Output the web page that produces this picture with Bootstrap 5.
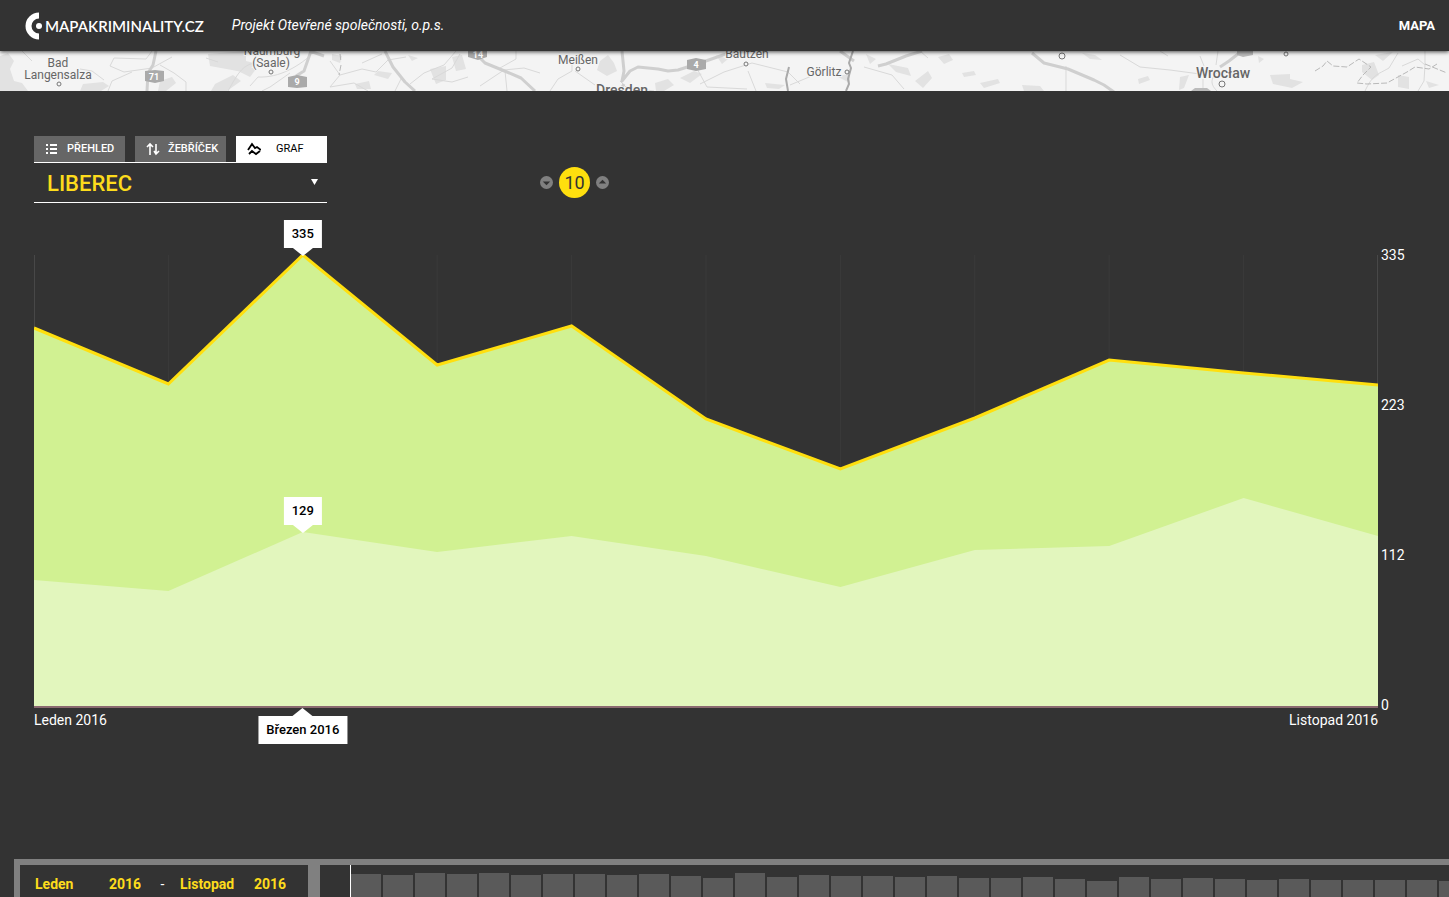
<!DOCTYPE html>
<html lang="cs">
<head>
<meta charset="utf-8">
<meta name="viewport" content="width=device-width, initial-scale=1">
<title>Mapa kriminality – Liberec</title>
<link rel="stylesheet" href="https://cdn.jsdelivr.net/npm/bootstrap@5.3.0/dist/css/bootstrap.min.css">
<style>
  body { background: #333; color: #fff; font-family: Roboto, sans-serif; font-size: 14px; line-height: 20px; overflow: hidden; }
  a { color: #fff; text-decoration: none; }
  .topbar { height: 51px; padding: 0 14px 0 25px; background: #333; box-shadow: 0 1px 4px rgba(0,0,0,.7); z-index: 2; }
  .brand-name { font: 600 15px/20px Lato, sans-serif; margin-left: 2px; }
  .motto { font-size: 14px; font-style: italic; margin-left: 28px; padding-bottom: 2px; }
  .map-link { font-size: 13px; font-weight: 700; }
  .map-strip { height: 40px; background: #f4f4f4; }
  .map-strip svg { width: 100%; height: 40px; }
  .content { padding: 45px 71px 0 34px; }
  .picker { width: 293px; }
  .tab-btn { width: 91px; height: 26px; padding: 0 0 0 11px; border: 0; border-radius: 0; background: #666; color: #fff; font-size: 11px; font-weight: 500; line-height: 26px; }
  .tab-btn svg { width: 14px; height: 14px; margin-right: 8px; }
  .tab-btn.current { background: #fff; color: #000; font-weight: 400; }
  .tab-btn.current svg { margin-right: 15px; }
  .place-box { height: 41px; border-top: 1px solid #fff; border-bottom: 1px solid #fff; }
  .plain-select { appearance: none; border: 0; padding: 0; background: none; color: #fddc1c; font-weight: 500; outline: 0; }
  .place { width: 100%; height: 39px; padding: 2px 0 0 13px; font-size: 22px; }
  .place-arrow { right: 8px; top: 16px; width: 9px; height: 6px; pointer-events: none; }
  .counter { margin-left: 213px; height: 41px; gap: 6px; }
  .step { width: 13px; height: 13px; padding: 0; border: 0; background: none; display: flex; }
  .step svg { width: 13px; height: 13px; }
  .count { width: 31px; height: 31px; border-radius: 50%; background: #ffdf0e; color: #333; font-size: 18px; line-height: 32px; text-align: center; }
  .chart { margin-top: 52px; height: 453px; }
  .chart > svg { width: 100%; height: 453px; display: block; }
  .chart line, .chart polyline { vector-effect: non-scaling-stroke; }
  .scale { left: 100%; top: -10px; height: 470px; padding-left: 3px; }
  .tip { transform: translateX(-50%); background: #fff; color: #000; height: 28px; line-height: 28px; padding: 0 8px; font-size: 13px; font-weight: 500; white-space: nowrap; left: 20%; }
  .tip::after { content: ""; position: absolute; left: 50%; top: 100%; margin-left: -10px; border: 10px solid transparent; border-top: 8px solid #fff; border-bottom: 0; }
  .tip.up::after { top: auto; bottom: 100%; border-top: 0; border-bottom: 8px solid #fff; }
  .tip-total { top: -35px; } .tip-part { top: 242px; } .tip-month { top: 461px; }
  .months { padding-top: 2px; }
  .timeline { margin-left: 14px; height: 38px; border-top: 6px solid #808080; border-left: 6px solid #808080; }
  .range { width: 300px; border-right: 12px solid #808080; padding: 9px 0 0 15px; flex: none; }
  .range .plain-select { height: 20px; font-size: 14px; font-weight: 700; }
  .w-month { width: 74px; } .w-year { width: 32px; }
  .dash { width: 39px; padding-left: 4px; }
  .bars { margin-left: 30px; border-left: 1px solid #fff; gap: 2px; min-width: 0; }
  .bars div { width: 30px; flex: none; background: #5a5a5a; }
</style>
</head>
<body class="d-flex flex-column min-vh-100">
<header class="topbar d-flex align-items-center position-relative">
  <a href="#" class="d-flex align-items-center" aria-label="Mapakriminality.cz">
    <svg width="18" height="28" viewBox="0 0 18 28" fill="#fff"><path d="M14 0.5A13.5 13.5 0 0 0 14 27.5V21.5A7.5 7.5 0 0 1 14 6.5Z"/><circle cx="14" cy="14" r="3"/></svg>
    <span class="brand-name">MAPAKRIMINALITY.CZ</span>
  </a>
  <span class="motto">Projekt Otevřené společnosti, o.p.s.</span>
  <a href="#" class="ms-auto map-link">MAPA</a>
</header>

<div class="map-strip">
  <svg viewBox="0 0 1449 40" preserveAspectRatio="xMinYMin slice" class="d-block" font-family="Roboto, sans-serif" font-size="12" fill="#666" text-anchor="middle">
    <g fill="#e2e2e2">
      <path d="M0 5l8-3 6 8-4 8 4 12 8 2 6 8H0z"/>
      <path d="M208 3l38-3v10l12 3-16 8-10-2-22-4zM238 12l18 6-6 8-10-5zM215 33l18-9 8 6-14 10h-16zM160 30l12-4 4 6-10 8h-8zM83 33l20-2 6 4-8 5H80z"/>
      <path d="M332 3l10 2-2 7-8-3zM378 20l14 2-4 6-14-4zM430 18l16-3v14l-10 4zM452 6l10-2 4 14-10 2zM355 33l14-3 2 8h-14zM408 4l10 3-6 3z"/>
      <path d="M600 10l8-6 6 8 3 8-10 5-10-6zM655 32l13-4 6 6-10 6h-8zM680 27l14-7 8 3-12 9zM716 4l12 4-6 5zM765 32l20 2-6 4-12-1zM836 25l14-2v9zM866 3l10 5-6 5z"/>
      <path d="M888 13l20 4 3 8-15-4zM915 30l13-10 4 7-9 10zM938 6l11-3 4 6-9 4zM962 22l12-2 2 4-12 2zM980 32l18-4 2 4-16 5zM1022 34l18 1 4 5h-20zM1082 2l13 2 7 5-12-1zM1138 28l10-3 2 4-11 4zM1180 26l9-2-5 13-5 2z"/>
      <path d="M1270 24l20-1v5l13 3-11 6-19-4zM1362 14l12-3 5 13-7 5-10-8zM1398 24l11 2v12l-11-2zM1375 4l18-3-10 9zM1426 30l13 4-10 3zM1258 5l6 3-5 4z"/>
    </g>
    <g fill="none" stroke="#d9d9d9" stroke-width="1">
      <path d="M22 0l10 10M80 18l12 2 12 9M152 0l-6 8-32-1-4 8 14 6 28-4 20-11M132 21l-20 9-4 10M160 14l14 8 12 9v9M206 7l12 4M228 40c10-18 14-25 26-28M290 22l-20 14-8 4M310 5c-12 10-30 22-52 21l-8 9M330 10l10 14 22-6 14 3 12-12 18-3M340 24l-10 12 24-4 14 8M362 12l20-9M392 16l10 10-7 14M410 33l14-11 20-8 12-14M460 3l-8 14-20 11 20 3 16-5"/>
      <path d="M480 35l24-16 20-2 16 5M505 20l2 20M516 0v8l-16 9M550 40l8-12 14-8v-8M575 20l20 14M620 30l6 6 28 4M695 14l12 22 40 2M700 33l24-12 28-9M752 12l36 9 12 12M748 20l8 20M790 34l24-10M864 16l28 8 12 14M920 0l8 7"/>
      <path d="M1120 4l20 12 30 3 30 4M1160 0l8 5M1066 15v25M1203 28v12M1200 5l4 10M1218 0l-2 14M1219 20c-10 8-8 14-2 20M1365 40c8-17 12-16 24-23l9-15M1402 15l16-7 7 6-1 16-6 10M1425 0v13"/>
    </g>
    <g fill="none" stroke="#cfcfcf" stroke-width="3" stroke-linejoin="round">
      <path d="M156 0l-3 14-5 8-1 18M311 0l-7 20-8 5M310 0l14 5M385 0l8 16 12 15 10 9M473 0l12 12 22 9 14 6 14 13M622 0l2 20-2 10 8-10 8-4 20 2 10 2 10-1 25-8 20-7 30-7M624 33l-4 7M922 0l-16 5-20 8-8 2M840 0l14 10M1032 2l12 10 24 6 26 11 10 5 10 7M1238 3l-9 7-9 6"/>
    </g>
    <path d="M789 16l-3 12 2 12M853 0l-4 12 2 5-3 11 1 5-3 7" fill="none" stroke="#aaa" stroke-width="2"/>
    <path d="M1315 20l8-5 4-5 6 5 14 1 12-8 12 8-8 8-6 8 10 1 20-1 20-11 8-5 14 2 8-5M1425 13l22 9M340 3l1 8M341 14l-2 10" fill="none" stroke="#b9b9b9" stroke-dasharray="6 2"/>
    <path d="M1237 0h16v4l-10 2-6-2zM1195 37h12l4 3h-20z" fill="#bbb"/>
    <g fill="#aaa">
      <path d="M145 20l10-1 9 1v10l-9 2-10-2zM288 26l9-2 10 2v10l-10 1-9-1zM468 0h19v6l-9 3-10-3zM687 9l9-2 10 2v9l-10 2-9-2z"/>
    </g>
    <g fill="#fff" font-size="9" font-weight="700"><text x="154" y="29">71</text><text x="297" y="34">9</text><text x="478" y="7">14</text><text x="696" y="17">4</text></g>
    <g fill="#f5f5f5" stroke="#777"><circle cx="59" cy="33" r="2"/><circle cx="271" cy="21" r="2"/><circle cx="578" cy="18" r="2"/><circle cx="746" cy="13" r="2"/><circle cx="847" cy="21" r="2"/><circle cx="1062" cy="5" r="3"/><circle cx="1222" cy="33" r="3"/><circle cx="1286" cy="3" r="2"/></g>
    <g stroke="#f5f5f5" stroke-width="2" paint-order="stroke">
      <text x="58" y="16">Bad</text><text x="58" y="28">Langensalza</text>
      <text x="272" y="4">Naumburg</text><text x="271" y="16">(Saale)</text>
      <text x="578" y="13">Meißen</text><text x="747" y="7">Bautzen</text><text x="824" y="25">Görlitz</text>
      <text x="622" y="44" font-size="14" font-weight="500">Dresden</text>
      <text x="1223" y="27" font-size="14" font-weight="500">Wrocław</text>
    </g>
  </svg>
</div>

<main class="content flex-grow-1">
  <div class="d-flex align-items-end">
    <div class="picker">
      <div class="d-flex justify-content-between">
        <button type="button" class="tab-btn d-flex align-items-center"><svg viewBox="0 0 14 14" fill="#fff"><path d="M1 2h2v2H1zM5 2h7v2H5zM1 6h2v2H1zM5 6h7v2H5zM1 10h2v2H1zM5 10h7v2H5z"/></svg>PŘEHLED</button>
        <button type="button" class="tab-btn d-flex align-items-center"><svg viewBox="0 0 14 14" fill="none" stroke="#fff" stroke-width="2"><path d="M4 13V3M1 5l3-3 3 3M10 2v9M8 9l2 3 3-3" stroke-width="1.6"/></svg>ŽEBŘÍČEK</button>
        <button type="button" class="tab-btn current d-flex align-items-center" aria-pressed="true"><svg viewBox="0 0 14 14" fill="none" stroke="#000" stroke-width="1.8"><path d="M1 8l4-6 3 4 2-1 4 3M2 12l3-3 4 3 4-3"/></svg>GRAF</button>
      </div>
      <div class="place-box position-relative">
        <select class="plain-select place" aria-label="Město"><option>LIBEREC</option></select>
        <svg class="place-arrow position-absolute" viewBox="0 0 9 6" fill="#fff"><path d="M1 0h7L4.500 6z"/></svg>
      </div>
    </div>
    <div class="counter d-flex align-items-center">
      <button type="button" class="step" aria-label="Méně"><svg viewBox="0 0 14 14"><circle cx="7" cy="7" r="7" fill="#808080"/><path d="M3 6h8L7 10z" fill="#333"/></svg></button>
      <span class="count">10</span>
      <button type="button" class="step" aria-label="Více"><svg viewBox="0 0 14 14"><circle cx="7" cy="7" r="7" fill="#808080"/><path d="M3 8h8L7 4z" fill="#333"/></svg></button>
    </div>
  </div>

  <div class="chart position-relative">
    <svg viewBox="0 0 10 453" preserveAspectRatio="none" role="img" aria-label="Vývoj počtu trestných činů">
      <g stroke="#3b3b3b"><line x1="1" x2="1" y2="451"/><line x1="2" x2="2" y2="451"/><line x1="3" x2="3" y2="451"/><line x1="4" x2="4" y2="451"/><line x1="5" x2="5" y2="451"/><line x1="6" x2="6" y2="451"/><line x1="7" x2="7" y2="451"/><line x1="8" x2="8" y2="451"/><line x1="9" x2="9" y2="451"/></g>
      <g stroke="#484848" stroke-width="2"><line x1="0" x2="0" y2="453"/><line x1="10" x2="10" y2="453"/></g>
      <polygon fill="#d1f192" points="0,451 0,73 1,129 2,0 3,110 4,71 5,164 6,214 7,163 8,105 9,118 10,130 10,451"/>
      <polygon fill="#e2f6bd" points="0,451 0,325 1,336 2,277 3,297 4,281 5,301 6,332 7,295 8,291 9,243 10,281 10,451"/>
      <polyline fill="none" stroke="#ffdf0e" stroke-width="3" points="0,73 1,129 2,0 3,110 4,71 5,164 6,214 7,163 8,105 9,118 10,130"/>
      <line x1="0" x2="10" y1="452" y2="452" stroke="#8a6a70" stroke-width="2"/>
    </svg>
    <div class="scale position-absolute d-flex flex-column justify-content-between"><span>335</span><span>223</span><span>112</span><span>0</span></div>
    <div class="tip tip-total position-absolute">335</div>
    <div class="tip tip-part position-absolute">129</div>
    <div class="tip tip-month up position-absolute">Březen 2016</div>
  </div>
  <div class="months d-flex justify-content-between"><span>Leden 2016</span><span>Listopad 2016</span></div>
</main>

<footer class="timeline d-flex">
  <div class="range d-flex">
    <select class="plain-select w-month" aria-label="Od měsíce"><option>Leden</option></select>
    <select class="plain-select w-year" aria-label="Od roku"><option>2016</option></select>
    <span class="dash text-center">-</span>
    <select class="plain-select w-month" aria-label="Do měsíce"><option>Listopad</option></select>
    <select class="plain-select w-year" aria-label="Do roku"><option>2016</option></select>
  </div>
  <div class="bars d-flex align-items-end flex-grow-1 overflow-hidden" id="bars"></div>
</footer>
<script src="https://cdn.jsdelivr.net/npm/bootstrap@5.3.0/dist/js/bootstrap.bundle.min.js"></script>
<script>
  // Monthly totals shown in the timeline, as bar heights in pixels
  const months = [23,22,24,23,24,22,23,23,22,23,21,19,24,20,22,21,21,20,21,19,19,20,18,16,20,18,19,18,17,18,17,17,17,17,16];
  const bars = document.getElementById('bars');
  for (const h of months) {
    const bar = document.createElement('div');
    bar.style.height = h + 'px';
    bars.append(bar);
  }
</script>
</body>
</html>
